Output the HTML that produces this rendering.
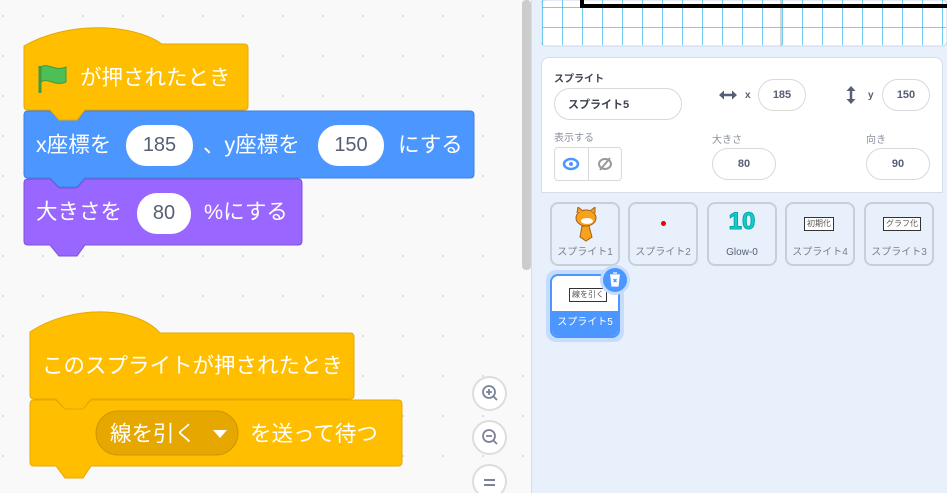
<!DOCTYPE html>
<html><head><meta charset="utf-8"><style>
*{margin:0;padding:0;box-sizing:border-box}
html,body{width:947px;height:493px;overflow:hidden}
body{position:relative;background:#f9f9f9;font-family:"Liberation Sans","Noto Sans CJK JP",sans-serif}
.a{position:absolute}
.t{position:absolute;color:#fff;font-size:21.5px;line-height:24px;white-space:nowrap}
.pill{position:absolute;background:#fff;border-radius:20px;color:#575e75;font-size:20px;display:flex;align-items:center;justify-content:center}
.inp{position:absolute;background:#fff;border:1px solid #d9d9d9;border-radius:20px;color:#575e75;font-size:11px;font-weight:bold;display:flex;align-items:center;justify-content:center}
.lbl{position:absolute;font-size:10px;color:#575e75}
.tile{position:absolute;width:70px;height:64px;border:2px solid #c8cfdb;border-radius:8px;background:#e8f0fc}
.tile span{position:absolute;bottom:6px;left:0;right:0;text-align:center;font-size:10px;color:#7a8090}
.bx{position:absolute;border:1px solid #333;background:#fff;font-size:8px;color:#555;padding:0 2px;line-height:12px}
.zb{position:absolute;width:35px;height:35px;border-radius:50%;border:2px solid #ddd;background:#fff}
</style></head><body>
<svg class="a" style="left:0;top:0" width="531" height="493">
<defs><pattern id="d" width="40" height="40" patternUnits="userSpaceOnUse" x="2" y="15"><circle cx="1" cy="1" r="1" fill="#d6d6d6"/></pattern></defs>
<rect width="531" height="493" fill="url(#d)"/>
<rect x="522" y="0" width="9" height="270" rx="4" fill="#cccccc"/>
<path d="M28,111 L50,111 L59,120 L77,120 L85,111 L470,111 Q474,111 474,115 L474,174 Q474,178 470,178 L85,178 L77,187 L59,187 L50,178 L28,178 Q24,178 24,174 L24,115 Q24,111 28,111Z" fill="#4c97ff" stroke="#3d80e0"/>
<path d="M28,179 L50,179 L59,188 L77,188 L85,179 L298,179 Q302,179 302,183 L302,241 Q302,245 298,245 L85,245 L77,256 L59,256 L50,245 L28,245 Q24,245 24,241 L24,183 Q24,179 28,179Z" fill="#9966ff" stroke="#7d52d9"/>
<path d="M24,46 C65,22 130,22 162,44 L244,44 Q248,44 248,48 L248,106 Q248,110 244,110 L85,110 L77,120 L59,120 L50,110 L28,110 Q24,110 24,106 Z" fill="#ffbf00" stroke="#e6a800"/>
<path d="M34,400 L56,400 L65,409 L83,409 L91,400 L398,400 Q402,400 402,404 L402,462 Q402,466 398,466 L91,466 L83,478 L65,478 L56,466 L34,466 Q30,466 30,462 L30,404 Q30,400 34,400Z" fill="#ffbf00" stroke="#e6a800"/>
<path d="M30,332 C70,305 135,305 160,333 L350,333 Q354,333 354,337 L354,395 Q354,399 350,399 L91,399 L83,409 L65,409 L56,399 L34,399 Q30,399 30,395 Z" fill="#ffbf00" stroke="#e6a800"/>
<rect x="96" y="411" width="142" height="44" rx="22" fill="#e6a800" stroke="#cc9600"/>
<path d="M213,430 L227,430 L220,438Z" fill="#fff"/>
<path d="M40,66 L40,93" stroke="#45993d" stroke-width="3"/>
<path d="M41,67 C48,62 55,72 66,67 L66,82 C55,87 48,77 41,82 Z" fill="#4cbf56" stroke="#45993d"/>
</svg>
<div class="t" style="left:80px;top:66px">が押されたとき</div>
<div class="t" style="left:36px;top:133px">x座標を</div>
<div class="pill" style="left:126px;top:125px;width:67px;height:41px">185</div>
<div class="t" style="left:203px;top:133px">、y座標を</div>
<div class="pill" style="left:318px;top:125px;width:66px;height:41px">150</div>
<div class="t" style="left:398px;top:133px">にする</div>
<div class="t" style="left:36px;top:200px">大きさを</div>
<div class="pill" style="left:137px;top:193px;width:54px;height:41px">80</div>
<div class="t" style="left:204px;top:200px">%にする</div>
<div class="t" style="left:42px;top:354px">このスプライトが押されたとき</div>
<div class="t" style="left:110px;top:422px">線を引く</div>
<div class="t" style="left:250px;top:422px">を送って待つ</div>
<div class="zb" style="left:472px;top:376px"><svg width="31" height="31"><circle cx="15" cy="14" r="6" fill="none" stroke="#7a8296" stroke-width="1.8"/><path d="M19,18 L23,22 M12,14 H18 M15,11 V17" stroke="#7a8296" stroke-width="1.8"/></svg></div>
<div class="zb" style="left:472px;top:420px"><svg width="31" height="31"><circle cx="15" cy="14" r="6" fill="none" stroke="#7a8296" stroke-width="1.8"/><path d="M19,18 L23,22 M12,14 H18" stroke="#7a8296" stroke-width="1.8"/></svg></div>
<div class="zb" style="left:472px;top:464px"><svg width="31" height="31"><path d="M10,14 H21 M10,19 H21" stroke="#7a8296" stroke-width="2"/></svg></div>

<div class="a" style="left:531px;top:0;width:416px;height:493px;background:#e8f0fc;border-left:1px solid #d5dcea"></div>
<svg class="a" style="left:541px;top:0" width="406" height="47">
<defs><pattern id="g" width="20" height="20" patternUnits="userSpaceOnUse" x="1" y="7"><path d="M0,0 H20 M0,0 V20" stroke="#21b1e8" stroke-width="1.3" fill="none"/></pattern></defs>
<rect width="406" height="46" rx="5" fill="#fff" stroke="#cdd6e6"/>
<rect x="1" y="0" width="404" height="45" fill="url(#g)"/>
<path d="M240,0 V46" stroke="#aaa"/>
<path d="M41,0 V6 H406" stroke="#000" stroke-width="4" fill="none"/>
</svg>
<div class="a" style="left:541px;top:57px;width:402px;height:136px;background:#fff;border:1px solid #d5dcea;border-radius:8px 8px 0 0"></div>
<div class="lbl" style="left:554px;top:70px;font-weight:bold;color:#3d4250">スプライト</div>
<div class="inp" style="left:554px;top:88px;width:128px;height:32px;justify-content:flex-start;padding-left:13px;color:#3d4250">スプライト5</div>
<svg class="a" style="left:718px;top:89px" width="20" height="12"><path d="M4,6 H16" stroke="#575e75" stroke-width="2.5"/><path d="M1,6 L6,1.5 L6,10.5Z M19,6 L14,1.5 L14,10.5Z" fill="#575e75"/></svg>
<div class="lbl" style="left:745px;top:90px;font-weight:bold">x</div>
<div class="inp" style="left:758px;top:79px;width:48px;height:32px">185</div>
<svg class="a" style="left:845px;top:85px" width="12" height="20"><path d="M6,4 V16" stroke="#575e75" stroke-width="2.5"/><path d="M6,1 L1.5,6 L10.5,6Z M6,19 L1.5,14 L10.5,14Z" fill="#575e75"/></svg>
<div class="lbl" style="left:868px;top:90px;font-weight:bold">y</div>
<div class="inp" style="left:882px;top:79px;width:48px;height:32px">150</div>
<div class="lbl" style="left:554px;top:129px;color:#8a8f9e">表示する</div>
<div class="lbl" style="left:712px;top:131px;color:#8a8f9e">大きさ</div>
<div class="lbl" style="left:866px;top:131px;color:#8a8f9e">向き</div>
<div class="a" style="left:554px;top:147px;width:68px;height:34px;border:1px solid #d9d9d9;border-radius:4px;background:#fff"></div>
<div class="a" style="left:588px;top:147px;width:1px;height:34px;background:#d9d9d9"></div>
<svg class="a" style="left:561px;top:156px" width="60" height="16"><ellipse cx="10" cy="8" rx="7" ry="5" fill="none" stroke="#4c97ff" stroke-width="2.5"/><circle cx="10" cy="8" r="2" fill="#4c97ff"/><ellipse cx="44" cy="8" rx="6" ry="5" fill="none" stroke="#999" stroke-width="2"/><path d="M39,14 L49,2" stroke="#999" stroke-width="2"/></svg>
<div class="inp" style="left:712px;top:148px;width:64px;height:32px">80</div>
<div class="inp" style="left:866px;top:148px;width:64px;height:32px">90</div>

<div class="tile" style="left:550px;top:202px"><svg class="a" style="left:20px;top:3px" width="30" height="38"><ellipse cx="14" cy="11" rx="10" ry="8" fill="#f7a11d" stroke="#a0631a"/><path d="M5,6 L6,0 L11,4 M18,4 L23,0 L23,6" fill="#f7a11d" stroke="#a0631a"/><ellipse cx="15" cy="14" rx="6" ry="3" fill="#fff"/><path d="M10,19 L8,30 L14,34 L20,30 L17,19 Z" fill="#f7a11d" stroke="#a0631a"/></svg><span>スプライト1</span></div>
<div class="tile" style="left:628px;top:202px"><div class="a" style="left:31px;top:17px;width:5px;height:5px;border-radius:50%;background:#e00"></div><span>スプライト2</span></div>
<div class="tile" style="left:707px;top:202px"><div class="a" style="left:0;right:0;top:4px;text-align:center;font-size:24px;font-weight:bold;color:#1cc9c9;-webkit-text-stroke:1px #0aa">10</div><span style="color:#575e75">Glow-0</span></div>
<div class="tile" style="left:785px;top:202px"><div class="bx" style="left:17px;top:13px">初期化</div><span>スプライト4</span></div>
<div class="tile" style="left:864px;top:202px"><div class="bx" style="left:17px;top:13px">グラフ化</div><span>スプライト3</span></div>
<div class="a" style="left:546px;top:270px;width:78px;height:72px;border-radius:10px;background:#c5dcfd"></div>
<div class="a" style="left:550px;top:274px;width:70px;height:64px;border:2px solid #4c97ff;border-radius:8px;background:#fff;overflow:hidden"><div class="a" style="left:0;right:0;bottom:0;height:25px;background:#4c97ff;color:#fff;font-size:10px;text-align:center;line-height:24px">スプライト5</div><div class="bx" style="left:17px;top:12px">線を引く</div></div>
<div class="a" style="left:600px;top:265px;width:30px;height:30px;border-radius:50%;background:#c5dcfd"></div>
<div class="a" style="left:603px;top:268px;width:24px;height:24px;border-radius:50%;background:#4c97ff"><svg width="24" height="24"><path d="M8,8 H16 L15,18 H9 Z M7,7 H17 M10,5 H14" fill="#fff" stroke="#fff" stroke-width="1.3"/><path d="M10.5,11 L13.5,14 M13.5,11 L10.5,14" stroke="#4c97ff" stroke-width="1.3"/></svg></div>
</body></html>
